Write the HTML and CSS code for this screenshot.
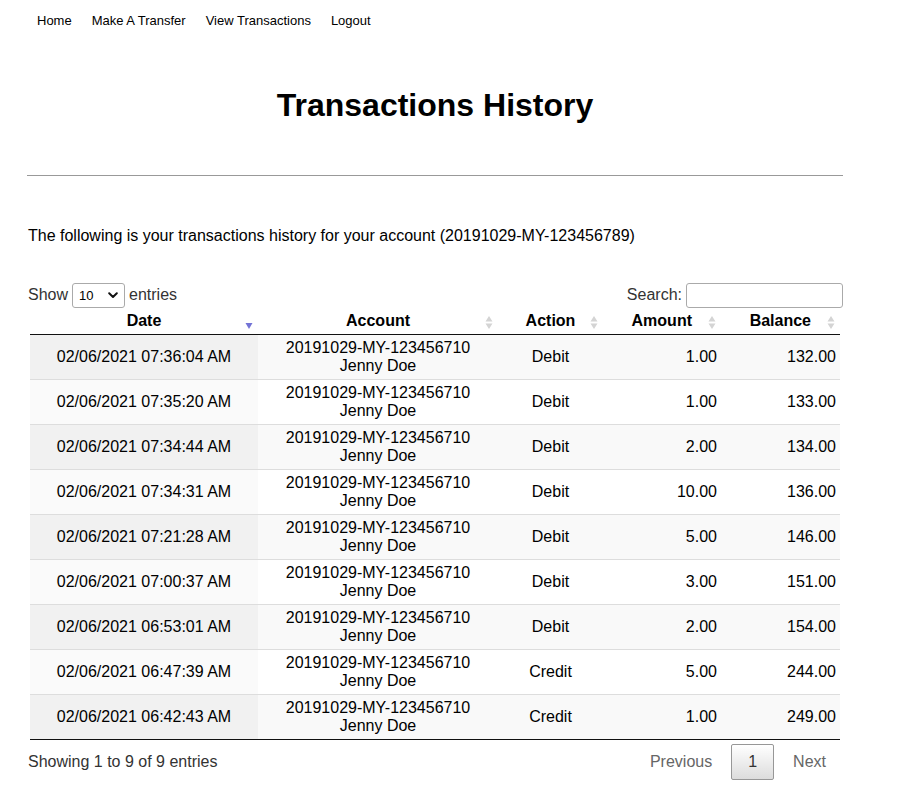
FILE: index.html
```html
<!DOCTYPE html>
<html lang="en">
<head>
<meta charset="utf-8">
<title>Transactions History</title>
<link rel="stylesheet" href="styles.css">
</head>
<body>
<nav class="topnav">
  <a class="nav-link" href="#">Home</a>
  <a class="nav-link" href="#">Make A Transfer</a>
  <a class="nav-link" href="#">View Transactions</a>
  <a class="nav-link" href="#">Logout</a>
</nav>
<main class="page">
  <h1 class="title">Transactions History</h1>
  <hr class="rule">
  <p class="intro">The following is your transactions history for your account (20191029-MY-123456789)</p>

  <div class="dt-wrapper">
    <div class="dt-controls">
      <label class="dt-length">Show
        <span class="select-wrap">
          <select class="dt-select">
            <option>10</option><option>25</option><option>50</option><option>100</option>
          </select>
          <svg class="chevron" width="10" height="7" viewBox="0 0 10 7"><path d="M1.2 1.3 L5 5 L8.8 1.3" fill="none" stroke="#111" stroke-width="2" stroke-linecap="round" stroke-linejoin="round"/></svg>
        </span>
        entries</label>
      <label class="dt-filter">Search:<input class="dt-search" type="search"></label>
    </div>

    <table class="dt-table">
      <colgroup>
        <col class="c-date"><col class="c-account"><col class="c-action"><col class="c-amount"><col class="c-balance">
      </colgroup>
      <thead>
        <tr>
          <th class="center">Date<svg class="sort" width="8" height="13" viewBox="0 0 8 13"><path d="M0.5 7 L7.5 7 L4 13 Z" fill="#7373d6"/></svg></th>
          <th class="center">Account<svg class="sort" width="8" height="13" viewBox="0 0 8 13"><path d="M0.5 5.5 L4 0 L7.5 5.5 Z M0.5 7.5 L7.5 7.5 L4 13 Z" fill="#d4d4d4"/></svg></th>
          <th class="center">Action<svg class="sort" width="8" height="13" viewBox="0 0 8 13"><path d="M0.5 5.5 L4 0 L7.5 5.5 Z M0.5 7.5 L7.5 7.5 L4 13 Z" fill="#d4d4d4"/></svg></th>
          <th class="right">Amount<svg class="sort" width="8" height="13" viewBox="0 0 8 13"><path d="M0.5 5.5 L4 0 L7.5 5.5 Z M0.5 7.5 L7.5 7.5 L4 13 Z" fill="#d4d4d4"/></svg></th>
          <th class="right">Balance<svg class="sort" width="8" height="13" viewBox="0 0 8 13"><path d="M0.5 5.5 L4 0 L7.5 5.5 Z M0.5 7.5 L7.5 7.5 L4 13 Z" fill="#d4d4d4"/></svg></th>
        </tr>
      </thead>
      <tbody>
        <tr><td class="sorted center">02/06/2021 07:36:04 AM</td><td class="center">20191029-MY-123456710<br>Jenny Doe</td><td class="center">Debit</td><td class="right">1.00</td><td class="right">132.00</td></tr>
        <tr><td class="sorted center">02/06/2021 07:35:20 AM</td><td class="center">20191029-MY-123456710<br>Jenny Doe</td><td class="center">Debit</td><td class="right">1.00</td><td class="right">133.00</td></tr>
        <tr><td class="sorted center">02/06/2021 07:34:44 AM</td><td class="center">20191029-MY-123456710<br>Jenny Doe</td><td class="center">Debit</td><td class="right">2.00</td><td class="right">134.00</td></tr>
        <tr><td class="sorted center">02/06/2021 07:34:31 AM</td><td class="center">20191029-MY-123456710<br>Jenny Doe</td><td class="center">Debit</td><td class="right">10.00</td><td class="right">136.00</td></tr>
        <tr><td class="sorted center">02/06/2021 07:21:28 AM</td><td class="center">20191029-MY-123456710<br>Jenny Doe</td><td class="center">Debit</td><td class="right">5.00</td><td class="right">146.00</td></tr>
        <tr><td class="sorted center">02/06/2021 07:00:37 AM</td><td class="center">20191029-MY-123456710<br>Jenny Doe</td><td class="center">Debit</td><td class="right">3.00</td><td class="right">151.00</td></tr>
        <tr><td class="sorted center">02/06/2021 06:53:01 AM</td><td class="center">20191029-MY-123456710<br>Jenny Doe</td><td class="center">Debit</td><td class="right">2.00</td><td class="right">154.00</td></tr>
        <tr><td class="sorted center">02/06/2021 06:47:39 AM</td><td class="center">20191029-MY-123456710<br>Jenny Doe</td><td class="center">Credit</td><td class="right">5.00</td><td class="right">244.00</td></tr>
        <tr><td class="sorted center">02/06/2021 06:42:43 AM</td><td class="center">20191029-MY-123456710<br>Jenny Doe</td><td class="center">Credit</td><td class="right">1.00</td><td class="right">249.00</td></tr>
      </tbody>
    </table>

    <div class="dt-footer">
      <div class="dt-info">Showing 1 to 9 of 9 entries</div>
      <div class="dt-paginate">
        <a class="page-btn disabled" href="#">Previous</a>
        <a class="page-btn current" href="#">1</a>
        <a class="page-btn disabled" href="#">Next</a>
      </div>
    </div>
  </div>
</main>
</body>
</html>
```

FILE: styles.css
```css
* { box-sizing: border-box; }

body {
  margin: 0;
  font-family: "Liberation Sans", Arial, sans-serif;
  color: #000;
  background: #fff;
}

.topnav {
  display: flex;
  align-items: center;
  height: 40px;
  padding-left: 27px;
  font-size: 13px;
}

.nav-link {
  color: #000;
  text-decoration: none;
  padding: 0 10px;
}

.page {
  width: 816px;
  margin-left: 27px;
}

.title {
  margin: 46px 0 0;
  font-size: 32px;
  line-height: 38px;
  font-weight: bold;
  text-align: center;
}

.rule {
  margin: 51px 0 0;
  height: 0;
  border: 0;
  border-top: 1px solid #999;
}

.intro {
  margin: 51px 0 0 1px;
  font-size: 16px;
  line-height: 18px;
}

.dt-wrapper {
  color: #333;
  font-size: 16px;
}

.dt-controls {
  display: flex;
  justify-content: space-between;
  align-items: center;
  margin-top: 36px;
  height: 28px;
  padding-left: 1px;
}

.dt-length, .dt-filter {
  display: flex;
  align-items: center;
  color: #333;
}

.select-wrap {
  position: relative;
  display: inline-block;
  margin: 0 4px 0 4px;
}

.dt-select {
  appearance: none;
  -webkit-appearance: none;
  width: 53px;
  height: 25px;
  padding: 0 0 0 6px;
  border: 1px solid #aaa;
  border-radius: 3px;
  background: #fff;
  font-family: "Liberation Sans", Arial, sans-serif;
  font-size: 13px;
  color: #000;
}

.chevron {
  position: absolute;
  left: 36px;
  top: 9px;
  pointer-events: none;
}

.dt-search {
  width: 157px;
  height: 25px;
  margin-left: 4px;
  border: 1px solid #aaa;
  border-radius: 3px;
  background: #fff;
  padding: 2px 4px;
}

.dt-table {
  width: 810px;
  margin: 0 auto;
  border-collapse: separate;
  border-spacing: 0;
  table-layout: fixed;
  color: #000;
}

.c-date { width: 228px; }
.c-account { width: 240px; }
.c-action { width: 105px; }
.c-amount { width: 118px; }
.c-balance { width: 119px; }

.dt-table th {
  position: relative;
  font-weight: bold;
  font-size: 16px;
  line-height: 18px;
  padding: 3px 18px 4px 18px;
  border-bottom: 1px solid #111;
}

.dt-table th.right {
  text-align: right;
  padding-right: 29px;
}

.sort {
  position: absolute;
  right: 5px;
  top: 7px;
}

.dt-table td {
  font-size: 16px;
  line-height: 18px;
  padding: 4px 4px;
  height: 45px;
  vertical-align: middle;
  border-top: 1px solid #ddd;
}

.dt-table tbody tr:first-child td { border-top: 0; height: 44px; }

.dt-table tbody tr:nth-child(odd) td { background: #f9f9f9; }
.dt-table tbody tr:nth-child(odd) td.sorted { background: #f1f1f1; }
.dt-table tbody tr:nth-child(even) td { background: #fff; }
.dt-table tbody tr:nth-child(even) td.sorted { background: #fafafa; }

.dt-table tbody tr:last-child td { border-bottom: 1px solid #111; }

.center { text-align: center; }
.right { text-align: right; }

.dt-footer {
  display: flex;
  justify-content: space-between;
  align-items: center;
  margin-top: 4px;
  padding-left: 1px;
}

.dt-info { color: #333; }

.dt-paginate {
  display: flex;
  align-items: center;
}

.page-btn {
  display: inline-block;
  margin-left: 2px;
  padding: 8px 16px;
  line-height: 18px;
  border: 1px solid transparent;
  border-radius: 2px;
  color: #666;
  text-decoration: none;
}

.page-btn.current {
  color: #333;
  border: 1px solid #979797;
  background: linear-gradient(to bottom, #fff 0%, #dcdcdc 100%);
}
```
